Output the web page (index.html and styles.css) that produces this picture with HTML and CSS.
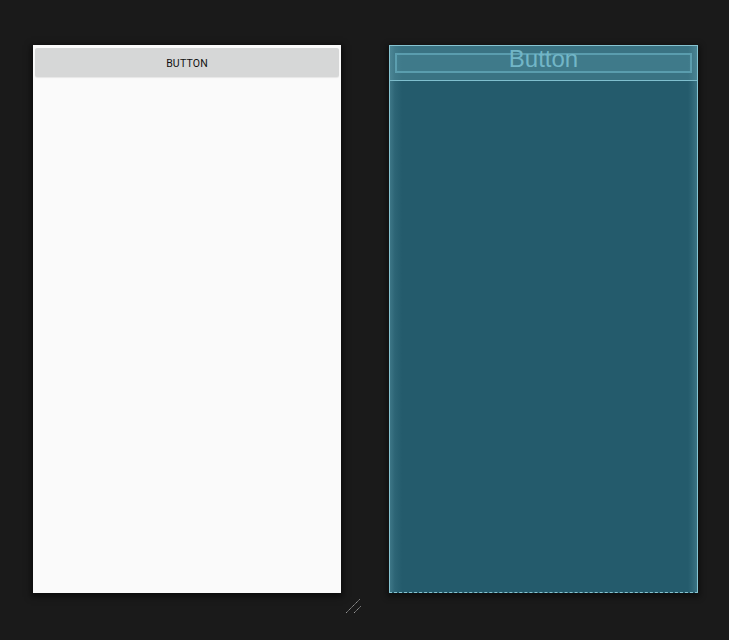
FILE: index.html
```html
<!DOCTYPE html>
<html>
<head>
<meta charset="utf-8">
<link rel="stylesheet" href="styles.css">
</head>
<body>
<div class="canvas">
  <div class="device">
    <div class="btn">BUTTON</div>
  </div>
  <div class="blueprint">
    <div class="bp-header">
      <div class="bp-btn"><span>Button</span></div>
    </div>
    <div class="bp-body"></div>
    <div class="edge edge-left"></div>
    <div class="edge edge-right"></div>
  </div>
  <svg class="resize" width="20" height="20" viewBox="0 0 20 20">
    <line x1="1" y1="15" x2="15" y2="1" stroke="#9a9a9a" stroke-width="1" stroke-dasharray="1.5 0.5"/>
    <line x1="9" y1="15" x2="16" y2="8" stroke="#9a9a9a" stroke-width="1" stroke-dasharray="1.5 0.5"/>
  </svg>
</div>
</body>
</html>
```
FILE: styles.css
```css
html, body {
  margin: 0;
  padding: 0;
  background: #1a1a1a;
  height: 100%;
  overflow: hidden;
}
.canvas {
  position: relative;
  display: flex;
  gap: 48px;
  padding: 45px 0 0 33px;
  align-items: flex-start;
}
.device {
  width: 308px;
  height: 548px;
  background: #fafafa;
  box-shadow: 0 2px 6px 2px rgba(0, 0, 0, 0.55);
  padding: 3px 2px 0 2px;
  box-sizing: border-box;
}
.btn {
  height: 29px;
  padding-top: 2px;
  box-sizing: border-box;
  background: #d6d7d7;
  border-radius: 2px;
  display: flex;
  align-items: center;
  justify-content: center;
  font-family: Roboto, "Liberation Sans", sans-serif;
  font-size: 10.5px;
  letter-spacing: 0.2px;
  color: #111;
  box-shadow: 0 1px 1px rgba(0,0,0,0.08);
}
.blueprint {
  position: relative;
  width: 309px;
  height: 548px;
  box-sizing: border-box;
  border: 1px solid #86c4d2;
  border-bottom-style: dashed;
  background: #245b6c;
  display: flex;
  flex-direction: column;
  box-shadow: 0 2px 6px 2px rgba(0, 0, 0, 0.45);
}
.bp-header {
  height: 35px;
  box-sizing: border-box;
  background: #3a7383;
  border-bottom: 1px solid #7fbfce;
  padding: 7px 5px 0 5px;
}
.bp-btn {
  height: 20px;
  box-sizing: border-box;
  border: 2px solid #5a9dae;
  background: #3f7a8a;
  display: flex;
  justify-content: center;
  position: relative;
}
.bp-btn span {
  position: relative;
  top: -10px;
  font-family: "Liberation Sans", Arial, sans-serif;
  font-size: 24px;
  line-height: 28px;
  height: 28px;
  color: #72b6c7;
}
.bp-body {
  flex: 1;
}
.edge {
  position: absolute;
  top: 0;
  bottom: 0;
  pointer-events: none;
}
.edge-left {
  left: 0;
  width: 12px;
  background: linear-gradient(to right, rgba(110,170,185,0.35), rgba(110,170,185,0.12) 40%, rgba(110,170,185,0));
}
.edge-right {
  right: 0;
  width: 9px;
  background: linear-gradient(to left, rgba(110,170,185,0.3), rgba(110,170,185,0.1) 60%, rgba(110,170,185,0));
}
.resize {
  position: absolute;
  left: 345px;
  top: 598px;
}
```
